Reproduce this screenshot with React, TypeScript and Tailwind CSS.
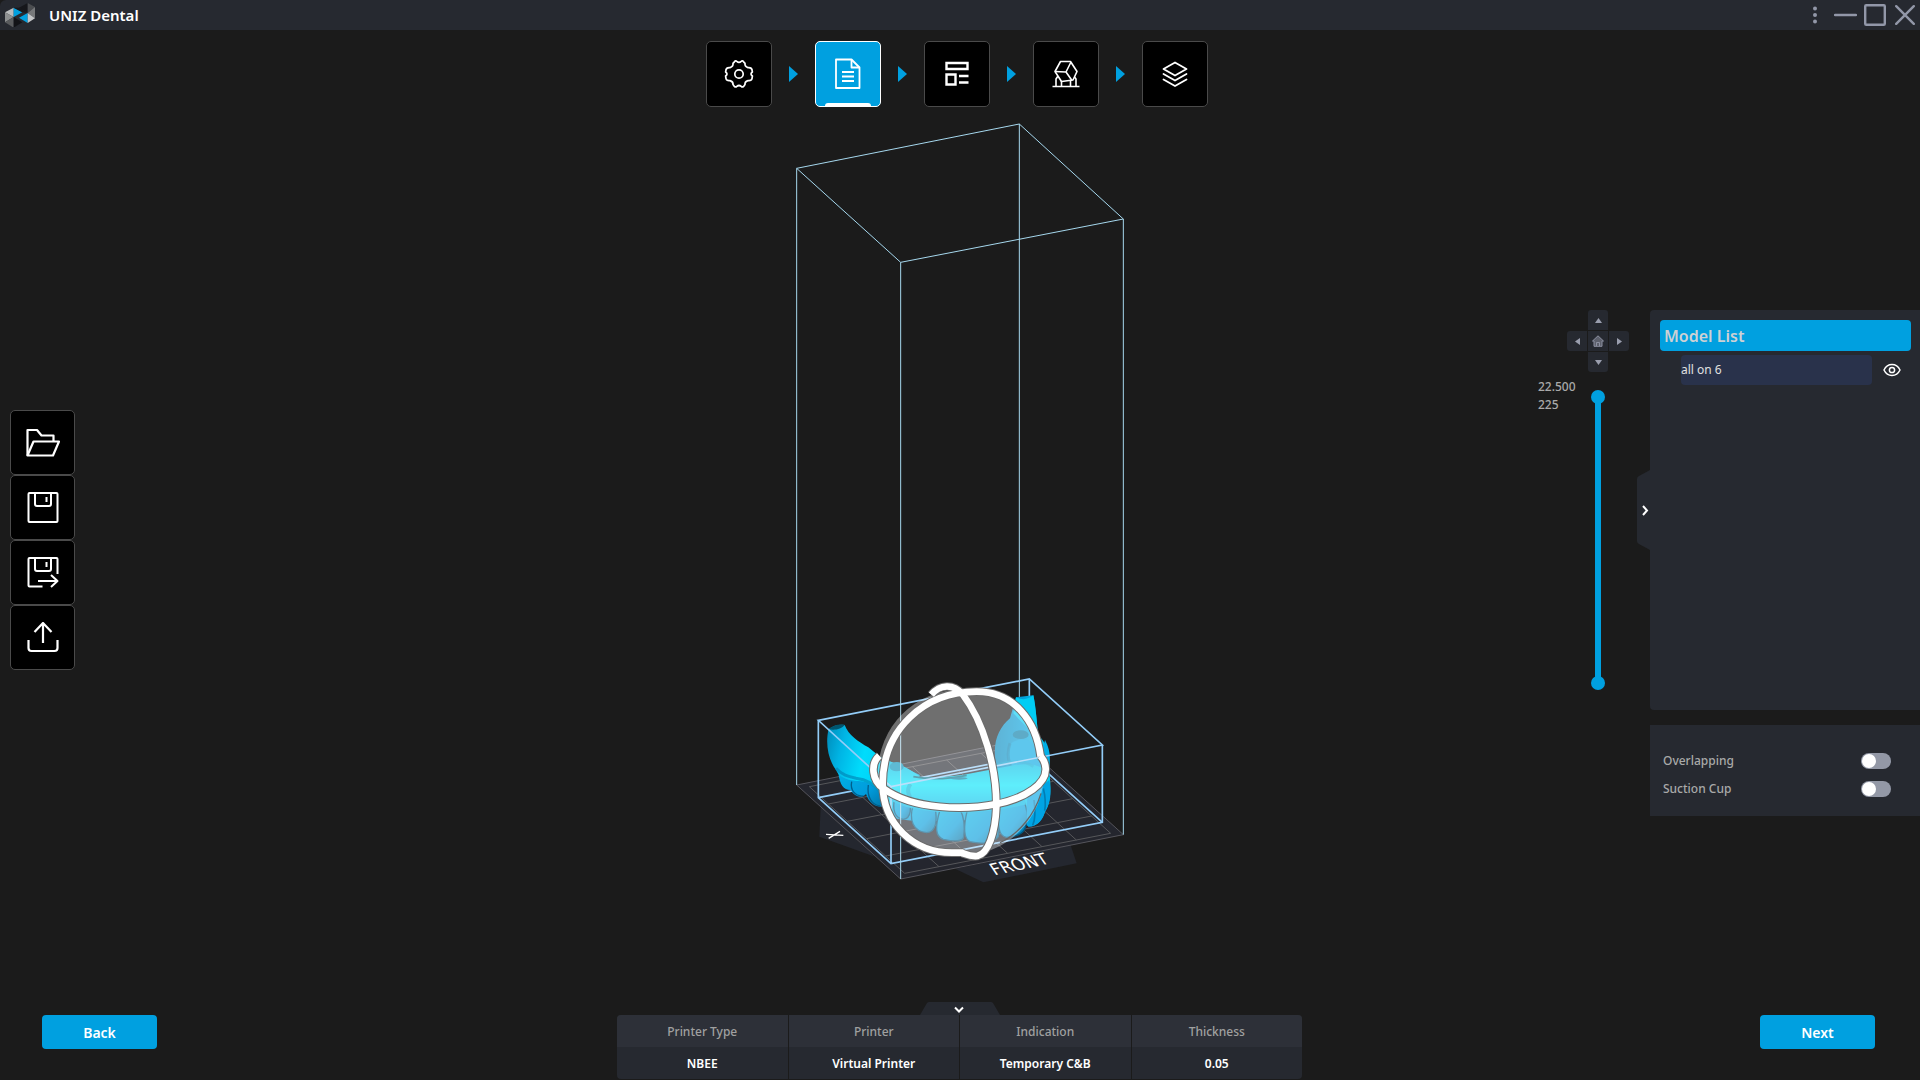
import { useState } from "react";

type IconProps = { className?: string };

function Logo() {
    return (
        <svg width="30" height="24" viewBox="0 0 90 72" aria-hidden="true">
            <polygon points="0,28 26,14 26,42" fill="#b9bbbd" />
            <polygon points="0,28 26,42 0,58" fill="#8d8f90" />
            <polygon points="0,58 26,42 26,74" fill="#595b5d" />
            <polygon points="26,42 26,74 52,58" fill="#121317" />
            <polygon points="26,14 52,28 26,42" fill="#00a0e0" />
            <polygon points="42,14 68,0 68,30" fill="#16171b" />
            <polygon points="26,14 44,14 66,30 52,28" fill="#16171b" />
            <polygon points="68,0 90,12 68,30" fill="#4b4d50" />
            <polygon points="68,30 90,12 90,46" fill="#77797b" />
            <polygon points="42,44 68,30 68,60" fill="#00a0e0" />
            <polygon points="68,30 90,46 68,60" fill="#c4c6c8" />
        </svg>
    );
}

function GearIcon() {
    return (
        <svg width="30" height="30" viewBox="0 0 30 30" fill="none" stroke="#fff" strokeWidth="1.7" strokeLinejoin="round">
            <path d="M10.6 2.6 Q11.6 1.2 12.8 2.4 Q15 4.4 17.2 2.4 Q18.4 1.2 19.4 2.6 L21 4.4 Q20.6 7.6 24 8.6 Q27.6 8.2 28 11 L28.4 13 Q25.6 15 28.4 17 L28 19.6 Q27.4 22 24 21.6 Q20.6 22.6 21 25.6 L19.6 27.4 Q18.4 28.6 17.2 27.4 Q15 25.6 12.8 27.4 Q11.6 28.6 10.4 27.4 L9 25.6 Q9.4 22.6 6 21.6 Q2.6 22 2 19.6 L1.6 17 Q4.4 15 1.6 13 L2 11 Q2.4 8.2 6 8.6 Q9.4 7.6 9 4.4 Z" />
            <circle cx="15" cy="15" r="4.2" />
        </svg>
    );
}

function FileIcon() {
    return (
        <svg width="26" height="32" viewBox="0 0 26 32" fill="none" stroke="#fff" strokeWidth="1.8" strokeLinejoin="round">
            <path d="M1 1.5 H16.5 L24.5 9.5 V30 H1 Z" />
            <path d="M16.5 1.5 V9.5 H24.5" />
            <path d="M7 14 H19 M7 18.5 H19 M7 23 H19" strokeWidth="2" />
        </svg>
    );
}

function LayoutIcon() {
    return (
        <svg width="24" height="26" viewBox="0 0 24 26" fill="none" stroke="#fff" strokeWidth="2.4">
            <path d="M1.5 2 H22.5 V8 H1.5 Z M1.5 13.5 H10.5 V23.5 H1.5 Z" />
            <path d="M14 15 H23.5 M14 21.5 H23.5" />
        </svg>
    );
}

function SupportIcon() {
    return (
        <svg width="28" height="28" viewBox="0 0 28 28" fill="none" stroke="#fff" strokeWidth="1.6" strokeLinejoin="round">
            <path d="M8.5 1.5 L18.5 1.5 L25 11.5 L21 20 L9.5 21.5 L3 11.5 Z" />
            <path d="M3 11.5 L14 12 L19 2 M14 12 L20 20.5" />
            <path d="M0.5 26.5 H27.5 M4 26 V19 L6 16 M24 26 V19 L22.5 17 M9.5 26 V21 M18.5 26 V21" />
        </svg>
    );
}

function LayersIcon() {
    return (
        <svg width="26" height="27" viewBox="0 0 26 27" fill="none" stroke="#fff" strokeWidth="1.8" strokeLinejoin="round" strokeLinecap="round">
            <path d="M13 1.5 L24.5 8 L13 14.5 L1.5 8 Z" />
            <path d="M1.5 13 L13 19.5 L24.5 13" />
            <path d="M1.5 18.5 L13 25 L24.5 18.5" />
        </svg>
    );
}

function FolderIcon() {
    return (
        <svg width="34" height="30" viewBox="0 0 34 30" fill="none" stroke="#fff" strokeWidth="2.2" strokeLinejoin="round">
            <path d="M1.5 27.5 V2 H11 L15.5 7.5 H27.5 V13" />
            <path d="M1.5 27.5 L7.5 13.5 H33 L27 27.5 Z" />
        </svg>
    );
}

function SaveIcon() {
    return (
        <svg width="32" height="32" viewBox="0 0 32 32" fill="none" stroke="#fff" strokeWidth="2" strokeLinejoin="round">
            <rect x="1.5" y="1" width="29" height="29" rx="1" />
            <path d="M8 1 V12 Q8 14 10 14 H22 Q24 14 24 12 V1 M19.5 5 V10" />
        </svg>
    );
}

function SaveAsIcon() {
    return (
        <svg width="32" height="32" viewBox="0 0 32 32" fill="none" stroke="#fff" strokeWidth="2" strokeLinejoin="round">
            <path d="M30.5 17 V2 Q30.5 1 29.5 1 H2.5 Q1.5 1 1.5 2 V28.5 Q1.5 29.5 2.5 29.5 H15.5" />
            <path d="M8 1 V12 Q8 14 10 14 H22 Q24 14 24 12 V1 M19.5 5 V10" />
            <path d="M11 24 H30 M24 18 L30.5 24 L24 30" />
        </svg>
    );
}

function ExportIcon() {
    return (
        <svg width="32" height="32" viewBox="0 0 32 32" fill="none" stroke="#fff" strokeWidth="2.2" strokeLinejoin="round">
            <path d="M16 21 V2 M7.5 10 L16 1 L24.5 10" />
            <path d="M1.5 18 V26 Q1.5 29 4.5 29 H27.5 Q30.5 29 30.5 26 V18" />
        </svg>
    );
}

function EyeIcon() {
    return (
        <svg width="18" height="14" viewBox="0 0 18 14" fill="none" stroke="#fff" strokeWidth="1.5">
            <path d="M1 7 C4.5 -0.3 13.5 -0.3 17 7 C13.5 14.3 4.5 14.3 1 7 Z" />
            <circle cx="9" cy="7" r="2.6" />
        </svg>
    );
}

function HomeIcon() {
    return (
        <svg width="12" height="12" viewBox="0 0 12 12" fill="#5d606c" stroke="#8c90a0" strokeWidth="1">
            <path d="M6 0.8 L11.5 6 H10 V11.3 H2 V6 H0.5 Z" />
            <path d="M4.5 11 V7.5 H7.5 V11" />
        </svg>
    );
}

function Triangle({ className }: IconProps) {
    return (
        <svg width="7" height="5" viewBox="0 0 7 5" className={className} aria-hidden="true">
            <path d="M0 5 L3.5 0 L7 5 Z" fill="#9a9eae" />
        </svg>
    );
}

const steps = [
    { name: "Settings", icon: <GearIcon /> },
    { name: "Models", icon: <FileIcon /> },
    { name: "Layout", icon: <LayoutIcon /> },
    { name: "Supports", icon: <SupportIcon /> },
    { name: "Slice", icon: <LayersIcon /> },
];

const tools = [
    { name: "Open", icon: <FolderIcon /> },
    { name: "Save", icon: <SaveIcon /> },
    { name: "Save as", icon: <SaveAsIcon /> },
    { name: "Export", icon: <ExportIcon /> },
];

const info = [
    { label: "Printer Type", value: "NBEE" },
    { label: "Printer", value: "Virtual Printer" },
    { label: "Indication", value: "Temporary C&B" },
    { label: "Thickness", value: "0.05" },
];

function TitleBar() {
    return (
        <header className="flex h-[30px] shrink-0 items-center rounded-tl-md bg-[#262930] pl-[5px] pr-[5px]">
            <Logo />
            <h1 className="ml-[14px] text-[15px] font-semibold leading-5 text-white">UNIZ Dental</h1>
            <div className="ml-auto flex items-center text-[#9297a8]">
                <button type="button" aria-label="Menu" className="mr-[17px]">
                    <svg width="4" height="18" viewBox="0 0 4 18" fill="currentColor">
                        <circle cx="2" cy="2.5" r="2" />
                        <circle cx="2" cy="9" r="2" />
                        <circle cx="2" cy="15.5" r="2" />
                    </svg>
                </button>
                <button type="button" aria-label="Minimize" className="mr-[7px]">
                    <svg width="23" height="22" viewBox="0 0 23 22" stroke="currentColor" strokeWidth="2.4" strokeLinecap="round">
                        <path d="M1 11 H22" />
                    </svg>
                </button>
                <button type="button" aria-label="Maximize" className="mr-[9px]">
                    <svg width="22" height="22" viewBox="0 0 22 22" fill="none" stroke="currentColor" strokeWidth="2.4">
                        <rect x="1.2" y="1.2" width="19.6" height="19.6" rx="1" />
                    </svg>
                </button>
                <button type="button" aria-label="Close">
                    <svg width="20" height="20" viewBox="0 0 20 20" stroke="currentColor" strokeWidth="2.4" strokeLinecap="round">
                        <path d="M1.2 1.2 L18.8 18.8 M18.8 1.2 L1.2 18.8" />
                    </svg>
                </button>
            </div>
        </header>
    );
}

function StepBar() {
    const [active, setActive] = useState(1);

    return (
        <nav className="flex shrink-0 items-center justify-center pr-1.5 pt-[11px]">
            {steps.map((step, i) => (
                <div key={step.name} className="flex items-center">
                    {i > 0 && (
                        <svg width="43" height="16" viewBox="0 0 43 16" aria-hidden="true">
                            <path d="M17 0 L26 8 L17 16 Z" fill="#00a0e0" />
                        </svg>
                    )}
                    <button
                        type="button"
                        aria-label={step.name}
                        onClick={() => setActive(i)}
                        className={
                            i === active
                                ? "relative flex size-[66px] items-center justify-center rounded-[5px] border border-white bg-[#00a0e0]"
                                : "flex size-[66px] items-center justify-center rounded-[5px] border border-[#4a4a4a] bg-black"
                        }
                    >
                        {step.icon}
                        {i === active && <span className="absolute inset-x-[9px] bottom-0 h-[3px] rounded-t-sm bg-white" />}
                    </button>
                </div>
            ))}
        </nav>
    );
}

// Build volume, loaded model and rotation gizmo
function Scene() {
    return (
        <svg width="360" height="780" viewBox="0 0 1080 2340" aria-label="Build volume" className="mb-[109px]">
            <defs>
                <linearGradient id="arm" x1="0" y1="0" x2="1" y2="0.25">
                    <stop offset="0" stopColor="#0089b8" />
                    <stop offset="0.2" stopColor="#00b4e4" />
                    <stop offset="0.45" stopColor="#00dcfc" />
                    <stop offset="0.7" stopColor="#00d0f6" />
                    <stop offset="1" stopColor="#00a6da" />
                </linearGradient>
                <linearGradient id="arch" x1="0" y1="0" x2="0" y2="1">
                    <stop offset="0" stopColor="#00b9e4" />
                    <stop offset="0.4" stopColor="#00e4fa" />
                    <stop offset="0.75" stopColor="#00bdea" />
                    <stop offset="1" stopColor="#0098d6" />
                </linearGradient>
                <linearGradient id="branch" x1="0" y1="0" x2="1" y2="0">
                    <stop offset="0" stopColor="#0087bd" />
                    <stop offset="0.5" stopColor="#009fda" />
                    <stop offset="1" stopColor="#00cdf2" />
                </linearGradient>
                <linearGradient id="tooth" x1="0" y1="0" x2="1" y2="1">
                    <stop offset="0" stopColor="#00b4e8" />
                    <stop offset="0.6" stopColor="#009cdc" />
                    <stop offset="1" stopColor="#006d9e" />
                </linearGradient>
            </defs>

            {/* build volume, far edges */}
            <g fill="none" stroke="#a6d8ee" strokeWidth="3">
                <path d="M50 175 L718 42 L1030 327 L362 457 Z" />
                <path d="M718 42 V1892" />
            </g>

            <g transform="translate(0 1650)">
                {/* plate */}
                <polygon points="122,440 118,530 285,590" fill="#24272f" />
                <polygon points="525,626 610,667 890,610 872,556" fill="#24272f" />
                <polygon points="50,375 362,657 1030,524 718,242" fill="#24262e" stroke="#55555c" strokeWidth="3" />
                <g fill="none" stroke="#56575a" strokeWidth="3">
                    <path d="M88 380 L374 640 L992 520 L706 260 Z" />
                    <path d="M145 432 L763 312 M202 484 L820 364 M260 536 L878 416 M317 588 L935 468" />
                    <path d="M477 620 L191 360 M580 600 L294 340 M683 580 L397 320 M786 560 L500 300 M889 540 L603 280" />
                </g>
                <text transform="translate(644 646) rotate(-12) skewX(22)" fontSize="50" fill="#fff" fontFamily="'DejaVu Sans', sans-serif">FRONT</text>
                <path d="M138 523 L190 526 M146 535 L180 514" stroke="#fff" strokeWidth="4" />

                {/* model bounds, far edges */}
                <g fill="none" stroke="#93cdf8" strokeWidth="5">
                    <path d="M115 413 L748 289 L967 487" />
                    <path d="M748 57 V289" />
                </g>

                {/* model */}
                <path d="M708 112 L760 106 C768 140 770 190 775 225 C800 250 812 280 806 330 C816 380 812 430 795 455 C785 485 765 502 745 498 L690 470 L650 320 C634 250 655 205 690 175 Z" fill="url(#branch)" />
                <path d="M708 112 C730 122 745 118 760 106 C768 150 772 200 774 225 C750 215 720 180 700 160 Z" fill="#00cdf4" />
                <path d="M693 250 C730 225 765 240 780 290 L790 340 L690 330 C682 300 682 270 693 250 Z" fill="#00a6e2" />
                <ellipse cx="722" cy="224" rx="24" ry="13" fill="#007ba6" />
                <path d="M795 240 C812 270 812 300 806 330 L780 300 Z" fill="#00aee6" />
                <path d="M690 250 C680 280 684 300 692 318" fill="none" stroke="#0074a2" strokeWidth="9" opacity="0.5" />
                <path d="M175 340 C180 375 190 390 212 390 C225 412 245 416 258 402 C268 430 285 442 310 440 L330 400 L300 330 L210 310 Z" fill="url(#tooth)" />
                <path d="M215 365 C210 390 225 410 250 408 M265 375 C260 410 275 435 300 438" fill="none" stroke="#005f8c" strokeWidth="4" />
                <path d="M146 207 C160 196 180 192 194 195 C205 225 235 245 265 262 L300 290 L420 345 L345 470 L300 400 C280 370 250 362 225 362 C200 360 175 350 168 330 C145 300 135 250 146 207 Z" fill="url(#arm)" />
                <path d="M168 325 C185 345 205 350 228 355 C255 358 280 368 300 396" fill="none" stroke="#007fb0" strokeWidth="9" opacity="0.6" />
                <path d="M146 207 C160 212 185 208 194 195 C180 190 158 196 146 207 Z" fill="#00566f" />
                <path d="M300 305 C340 300 380 320 420 350 C500 362 620 330 700 316 C760 305 800 320 808 350 C812 400 760 450 700 460 L620 480 C540 480 400 490 345 475 C310 440 300 370 300 305 Z" fill="url(#arch)" />
                <path d="M400 350 C440 358 500 358 560 346" fill="none" stroke="#003f52" strokeWidth="5" opacity="0.7" />
                <g stroke="#00577f" strokeWidth="4">
                    <path d="M345 410 C335 450 345 475 370 478 C395 475 395 440 385 415 Z" fill="url(#tooth)" />
                    <path d="M400 435 C385 480 400 515 440 518 C470 515 472 480 465 440 Z" fill="url(#tooth)" />
                    <path d="M480 450 C465 500 465 530 490 538 C525 545 550 545 551 530 C555 500 552 470 540 448 Z" fill="url(#tooth)" />
                    <path d="M562 450 C550 500 550 535 570 545 C600 552 640 552 655 530 C660 500 655 470 645 445 Z" fill="url(#tooth)" />
                    <path d="M660 440 C650 490 655 530 680 532 C715 530 735 520 738 495 C745 460 740 440 730 420 Z" fill="url(#tooth)" />
                </g>
                <path d="M340 412 C400 446 560 462 735 422" fill="none" stroke="#00b8e8" strokeWidth="24" />
                <path d="M742 410 C740 460 735 490 745 500 C775 500 790 475 795 455 C812 430 815 400 808 360 Z" fill="#00a4e4" />
                <path d="M762 420 C766 450 768 475 758 496 M790 385 C796 410 798 430 794 452" fill="none" stroke="#007db4" strokeWidth="5" />
                <path d="M392 372 C378 388 384 410 404 428" fill="none" stroke="#0093bd" strokeWidth="12" opacity="0.5" />
                <ellipse cx="350" cy="320" rx="21" ry="14" fill="#0092bc" />
                <ellipse cx="537" cy="355" rx="26" ry="4" fill="#007a9c" />
                <path d="M650 316 C690 300 735 302 760 320" fill="none" stroke="#00a3cf" strokeWidth="8" opacity="0.6" />

                {/* near edges of both boxes */}
                <g fill="none" stroke="#93cdf8" strokeWidth="5">
                    <path d="M115 181 L748 57 L967 255 L333 380 Z" />
                    <path d="M115 181 V413 L333 611 L967 487 V255 M333 380 V611" />
                </g>
            </g>
            <path d="M50 175 V2025 M362 457 V2307 M1030 327 V2174" fill="none" stroke="#a6d8ee" strokeWidth="3" />

            {/* gizmo */}
            <g transform="translate(0 1650)">
                <circle cx="543" cy="338" r="249" fill="#fff" fillOpacity="0.37" />
                <path d="M783 400 C765 460 720 520 660 548" fill="none" stroke="#666" strokeWidth="4" />
                {[
                    { color: "#6c6c6c", width: 26 },
                    { color: "#ffffff", width: 20 },
                ].map((ring) => (
                    <g key={ring.color} fill="none" stroke={ring.color} strokeWidth={ring.width}>
                        <path d="M782 290 C768 180 700 95 590 95 C430 95 308 210 308 372 C308 490 400 580 520 578 L550 578" />
                        <path d="M454 104 C480 73 520 70 548 103 C610 185 650 320 649 440 C646 520 625 580 592 588 C572 590 560 584 546 579" />
                        <path d="M298 287 C270 312 276 362 310 385 C400 452 560 450 650 432 C740 414 800 370 797 325 C796 308 790 297 781 288" />
                    </g>
                ))}
            </g>
        </svg>
    );
}

const sliderInput =
    "pointer-events-none absolute inset-0 m-0 h-full w-[14px] appearance-none bg-transparent [direction:rtl] [writing-mode:vertical-lr] [&::-webkit-slider-thumb]:pointer-events-auto [&::-webkit-slider-thumb]:size-[14px] [&::-webkit-slider-thumb]:appearance-none [&::-webkit-slider-thumb]:rounded-full [&::-webkit-slider-thumb]:bg-[#00a0e0]";

const padButton = "flex size-5 items-center justify-center bg-[#262930]";

function ViewControls() {
    const [top, setTop] = useState(225);
    const [bottom, setBottom] = useState(0);

    return (
        <div className="w-[99px]">
            <div className="ml-[29px] grid w-[62px] grid-cols-3 gap-px">
                <button type="button" aria-label="View from top" className={`${padButton} col-start-2 rounded-t-[3px]`}>
                    <Triangle />
                </button>
                <button type="button" aria-label="View from left" className={`${padButton} col-start-1 rounded-l-[3px]`}>
                    <Triangle className="-rotate-90" />
                </button>
                <button type="button" aria-label="Home view" className={padButton}>
                    <HomeIcon />
                </button>
                <button type="button" aria-label="View from right" className={`${padButton} rounded-r-[3px]`}>
                    <Triangle className="rotate-90" />
                </button>
                <button type="button" aria-label="View from bottom" className={`${padButton} col-start-2 rounded-b-[3px]`}>
                    <Triangle className="rotate-180" />
                </button>
            </div>
            <div className="mt-1.5 flex">
                <div className="w-[53px] text-[12px] font-medium leading-[18px] text-[#a9a9a9]">
                    <p>{(top / 10).toFixed(3)}</p>
                    <p>{top}</p>
                </div>
                <div className="relative mt-3 flex h-[300px] w-[14px] justify-center py-[7px]">
                    <div className="w-1.5 bg-[#00a0e0]" />
                    <input
                        type="range"
                        aria-label="Top layer"
                        min={0}
                        max={225}
                        value={top}
                        onChange={(e) => setTop(Number(e.target.value))}
                        className={sliderInput}
                    />
                    <input
                        type="range"
                        aria-label="Bottom layer"
                        min={0}
                        max={225}
                        value={bottom}
                        onChange={(e) => setBottom(Number(e.target.value))}
                        className={sliderInput}
                    />
                </div>
            </div>
        </div>
    );
}

function Toggle({ id, label }: { id: string; label: string }) {
    return (
        <div className="flex items-center justify-between">
            <label htmlFor={id} className="text-[12px] font-medium leading-4 text-[#a9a9a9]">{label}</label>
            <input
                id={id}
                type="checkbox"
                role="switch"
                className="h-4 w-[30px] appearance-none rounded-full bg-[#9398a6] p-px before:block before:size-[14px] before:rounded-full before:bg-white checked:bg-[#00a0e0] checked:before:ml-auto"
            />
        </div>
    );
}

function SidePanel() {
    return (
        <aside>
            <div className="flex items-center">
                <button type="button" aria-label="Collapse panel">
                    <svg width="13" height="80" viewBox="0 0 13 80">
                        <path d="M13 0 L2 6 Q0 7 0 9 V71 Q0 73 2 74 L13 80 Z" fill="#262930" />
                        <path d="M6 36 L10 40.5 L6 45" fill="none" stroke="#fff" strokeWidth="2" />
                    </svg>
                </button>
                <section className="h-[400px] w-[270px] rounded-l-[4px] bg-[#262930] py-[10px] pl-[10px] pr-[9px]">
                    <h2 className="h-[31px] rounded-[4px] bg-[#00a0e0] pl-1 text-[16px] font-semibold leading-[32px] text-[#cdd1d4]">Model List</h2>
                    <ul className="mt-1">
                        <li className="flex items-center pl-[21px] pr-[10px]">
                            <button type="button" className="h-[30px] flex-1 rounded-[4px] bg-[#29324b] text-left text-[12px] text-[#e0e0e0]">all on 6</button>
                            <button type="button" aria-label="Toggle visibility" className="ml-[11px]">
                                <EyeIcon />
                            </button>
                        </li>
                    </ul>
                </section>
            </div>
            <section className="ml-[13px] mt-[15px] flex h-[91px] flex-col gap-3 bg-[#262930] pl-[13px] pr-[29px] pt-7">
                <Toggle id="overlapping" label="Overlapping" />
                <Toggle id="suction-cup" label="Suction Cup" />
            </section>
        </aside>
    );
}

function Footer() {
    return (
        <footer className="flex shrink-0 items-end justify-between pl-[42px] pr-[45px]">
            <button type="button" className="mb-[31px] h-[34px] w-[115px] rounded-[4px] bg-[#00a0e0] text-[14px] font-semibold text-white">Back</button>
            <div className="flex flex-col items-center pb-px pl-0.5">
                <button type="button" aria-label="Hide printer info">
                    <svg width="80" height="13" viewBox="0 0 80 13" className="block">
                        <path d="M0 13 L7 1 Q8 0 9 0 H71 Q72 0 73 1 L80 13 Z" fill="#262930" />
                        <path d="M35 5.5 L39 9.5 L43 5.5" fill="none" stroke="#fff" strokeWidth="2" />
                    </svg>
                </button>
                <dl className="grid w-[685px] grid-cols-4 gap-px overflow-hidden rounded-[4px] text-center text-[12px]">
                    {info.map((item) => (
                        <div key={item.label} className="bg-[#262930]">
                            <dt className="h-8 bg-[#2d3038] font-medium leading-[33px] text-[#a0a0a0]">{item.label}</dt>
                            <dd className="h-8 font-semibold leading-[33px] text-white">{item.value}</dd>
                        </div>
                    ))}
                </dl>
            </div>
            <button type="button" className="mb-[31px] h-[34px] w-[115px] rounded-[4px] bg-[#00a0e0] text-[14px] font-semibold text-white">Next</button>
        </footer>
    );
}

export default function App() {
    return (
        <div className="flex h-screen flex-col overflow-hidden bg-[#1b1b1b] font-['Noto_Sans',sans-serif]">
            <TitleBar />
            <StepBar />
            <main className="grid min-h-0 flex-1 grid-cols-[1fr_auto_1fr] items-center">
                <div className="mb-[29px] flex flex-col items-start pl-[10px]">
                    {tools.map((tool) => (
                        <button
                            key={tool.name}
                            type="button"
                            aria-label={tool.name}
                            className="flex size-[65px] items-center justify-center rounded-[5px] border border-[#4a4a4a] bg-black"
                        >
                            {tool.icon}
                        </button>
                    ))}
                </div>
                <Scene />
                <div className="mt-[17px] flex items-start justify-end">
                    <ViewControls />
                    <SidePanel />
                </div>
            </main>
            <Footer />
        </div>
    );
}
